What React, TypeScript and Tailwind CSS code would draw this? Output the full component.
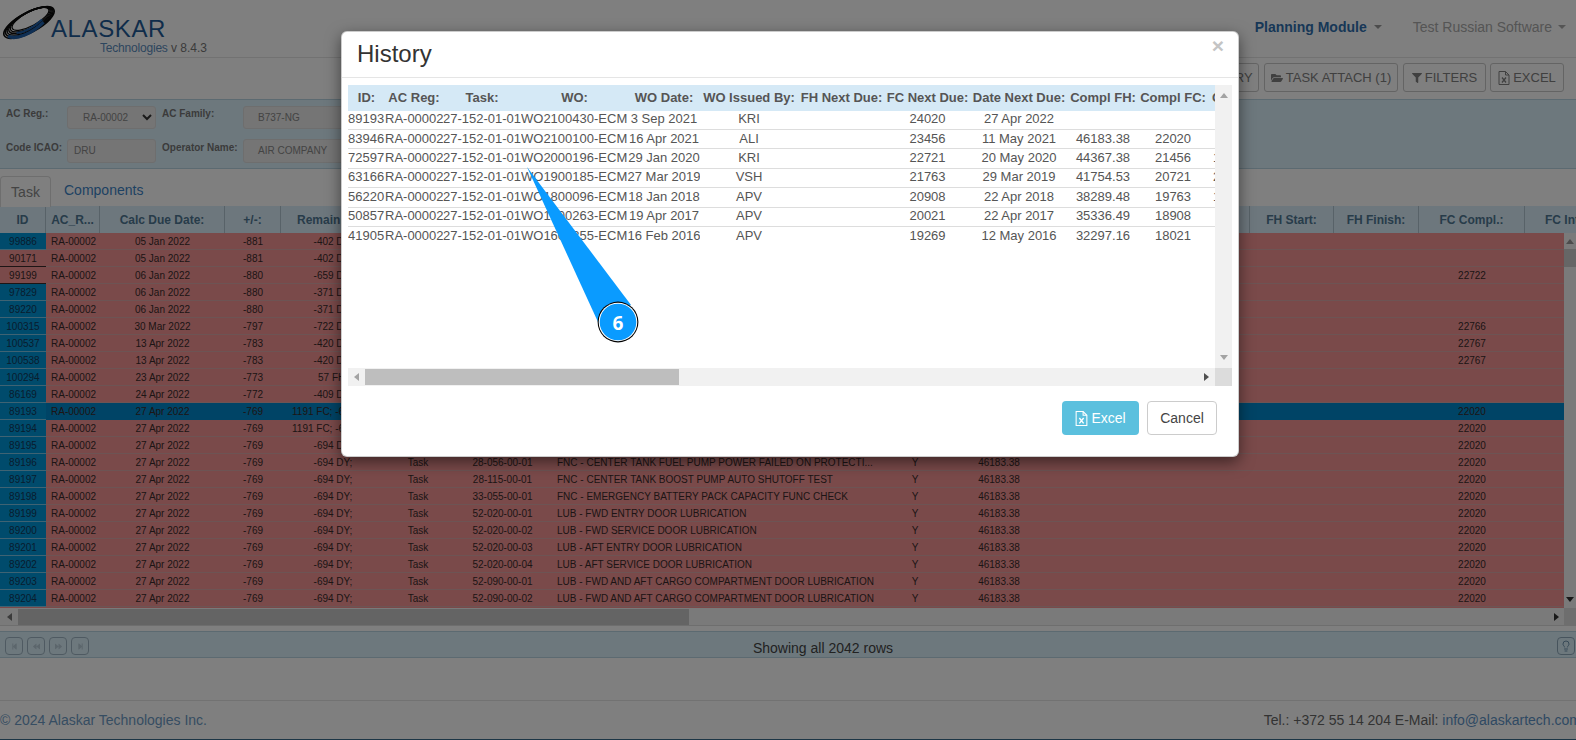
import React from "react";
import { FaFolderOpen, FaFilter, FaStepBackward, FaBackward, FaForward, FaStepForward } from "react-icons/fa";
import { Lightbulb } from "lucide-react";

const sans = "font-['Liberation_Sans',Arial,sans-serif]";

const top = [
  ["99886", "05 Jan 2022", "-881", "-402 DY;", "", 1],
  ["90171", "05 Jan 2022", "-881", "-402 DY;", "", 0],
  ["99199", "06 Jan 2022", "-880", "-659 DY;", "22722", 0],
  ["97829", "06 Jan 2022", "-880", "-371 DY;", "", 1],
  ["89220", "06 Jan 2022", "-880", "-371 DY;", "", 1],
  ["100315", "30 Mar 2022", "-797", "-722 DY;", "22766", 1],
  ["100537", "13 Apr 2022", "-783", "-420 DY;", "22767", 1],
  ["100538", "13 Apr 2022", "-783", "-420 DY;", "22767", 1],
  ["100294", "23 Apr 2022", "-773", "57 FH;", "", 1],
  ["86169", "24 Apr 2022", "-772", "-409 DY;", "", 1],
  ["89193", "27 Apr 2022", "-769", "1191 FC; -694 DY;", "22020", 1],
  ["89194", "27 Apr 2022", "-769", "1191 FC; -694 DY;", "22020", 1],
  ["89195", "27 Apr 2022", "-769", "-694 DY;", "22020", 1],
] as const;

const lower = [
  ["89196", "28-056-00-01", "FNC - CENTER TANK FUEL PUMP POWER FAILED ON PROTECTI..."],
  ["89197", "28-115-00-01", "FNC - CENTER TANK BOOST PUMP AUTO SHUTOFF TEST"],
  ["89198", "33-055-00-01", "FNC - EMERGENCY BATTERY PACK CAPACITY FUNC CHECK"],
  ["89199", "52-020-00-01", "LUB - FWD ENTRY DOOR LUBRICATION"],
  ["89200", "52-020-00-02", "LUB - FWD SERVICE DOOR LUBRICATION"],
  ["89201", "52-020-00-03", "LUB - AFT ENTRY DOOR LUBRICATION"],
  ["89202", "52-020-00-04", "LUB - AFT SERVICE DOOR LUBRICATION"],
  ["89203", "52-090-00-01", "LUB - FWD AND AFT CARGO COMPARTMENT DOOR LUBRICATION"],
  ["89204", "52-090-00-02", "LUB - FWD AND AFT CARGO COMPARTMENT DOOR LUBRICATION"],
];

const history = [
  ["89193", "WO2100430-ECM", "3 Sep 2021", "KRI", "24020", "27 Apr 2022", "", "", ""],
  ["83946", "WO2100100-ECM", "16 Apr 2021", "ALI", "23456", "11 May 2021", "46183.38", "22020", ""],
  ["72597", "WO2000196-ECM", "29 Jan 2020", "KRI", "22721", "20 May 2020", "44367.38", "21456", "11 Jan 2020"],
  ["63166", "WO1900185-ECM", "27 Mar 2019", "VSH", "21763", "29 Mar 2019", "41754.53", "20721", "27 Mar 2019"],
  ["56220", "WO1800096-ECM", "18 Jan 2018", "APV", "20908", "22 Apr 2018", "38289.48", "19763", "18 Jan 2018"],
  ["50857", "WO1700263-ECM", "19 Apr 2017", "APV", "20021", "22 Apr 2017", "35336.49", "18908", ""],
  ["41905", "WO1600355-ECM", "16 Feb 2016", "APV", "19269", "12 May 2016", "32297.16", "18021", ""],
];

function ExcelIcon({ color, size = 14 }: { color: string; size?: number }) {
  return (
    <svg width={size - 2} height={size} viewBox="0 0 12 14" fill="none" stroke={color} strokeWidth="1">
      <path d="M1 .5h6.5L11 4v9.5H1z" />
      <path d="M7.5.5V4H11" />
      <path d="M4 6.5l4 5M8 6.5l-4 5" strokeWidth="1.3" />
    </svg>
  );
}

function Logo() {
  return (
    <div className="relative w-[210px] h-[50px] shrink-0">
      <svg className="absolute left-[1px] top-[5px]" width="56" height="35" viewBox="0 0 56 35" fill="none">
        <g transform="rotate(-28 28 17.5)">
          <ellipse cx="28" cy="17.5" rx="28" ry="10" stroke="#0c0c0c" strokeWidth="1.6" />
          <ellipse cx="28.6" cy="17" rx="26.5" ry="9.4" stroke="#0c0c0c" strokeWidth="1.6" />
          <ellipse cx="29.2" cy="16.5" rx="25" ry="8.8" stroke="#0c0c0c" strokeWidth="1.4" />
          <ellipse cx="29.8" cy="16" rx="23.5" ry="8.2" stroke="#0c0c0c" strokeWidth="1.4" />
          <ellipse cx="30.4" cy="15.5" rx="22" ry="7.6" stroke="#0c0c0c" strokeWidth="1.2" />
          <ellipse cx="31" cy="15" rx="20.5" ry="7" stroke="#0c0c0c" strokeWidth="1.2" />
          <path d="M3 20c6 7 22 9 38 4" stroke="#1f5fa8" strokeWidth="3.4" />
          <path d="M12 21c7 3 18 3 29 0" stroke="#1f5fa8" strokeWidth="2" />
        </g>
      </svg>
      <div className="absolute left-[51px] top-[13px] text-[24px] leading-[32px] tracking-[0.6px] text-[#1f5a96] whitespace-nowrap">ALASKAR</div>
      <div className="absolute left-[100px] top-[40px] text-[12px] leading-[16px] tracking-[-0.2px] text-[#5b8cbd] whitespace-nowrap">Technologies</div>
      <div className="absolute left-[171px] top-[40px] text-[12px] leading-[16px] text-[#777] whitespace-nowrap">v 8.4.3</div>
    </div>
  );
}

function Tool({ children, className = "" }: { children: React.ReactNode; className?: string }) {
  return (
    <div className={`h-[29px] flex items-center justify-center gap-[3px] border border-[#c8c8c8] rounded-[3px] text-[13px] text-[#808080] bg-white whitespace-nowrap ${className}`}>
      {children}
    </div>
  );
}

function Row({ r }: { r: { id: string; date: string; pm: string; rem: string; no?: string; desc?: string; fc: string; blue: boolean; sel: boolean } }) {
  return (
    <div className={`flex h-[17px] shrink-0 items-start leading-[18px] border-b text-[10px] text-[#3a2a2a] w-[1564px] ${r.sel ? "bg-[#0088cc] border-[#0088cc]" : "bg-[#f59595] border-[#dba8a8]"}`}>
      <div className={`w-[46px] h-[17px] text-center border-b shrink-0 ${r.blue ? "bg-[#0096d9] border-[#7fc6e6] text-[#123a5c]" : ""}`}>{r.id}</div>
      <div className="w-[54px] pl-[5px] shrink-0">RA-00002</div>
      <div className="w-[125px] text-center shrink-0">{r.date}</div>
      <div className="w-[56px] text-center shrink-0">{r.pm}</div>
      <div className="w-[104px] text-center shrink-0 whitespace-nowrap">{r.rem}</div>
      <div className="w-[66px] text-center shrink-0">Task</div>
      <div className="w-[103px] text-center shrink-0">{r.no}</div>
      <div className="w-[341px] pl-[3px] shrink-0 whitespace-nowrap">{r.desc}</div>
      <div className="w-[40px] text-center shrink-0">{r.desc ? "Y" : ""}</div>
      <div className="w-[128px] text-center shrink-0">{r.desc ? "46183.38" : ""}</div>
      <div className="w-[356px] shrink-0" />
      <div className="w-[106px] text-center shrink-0">{r.fc}</div>
    </div>
  );
}

const th = "h-[27px] flex items-center justify-center border-r border-[#b0c4d0] shrink-0 whitespace-nowrap";
const hc = "flex items-center shrink-0 whitespace-nowrap overflow-hidden";

function Triangle({ dir, color = "#888", className = "" }: { dir: "up" | "down" | "left" | "right"; color?: string; className?: string }) {
  const d = { up: "M0 5L4 0l4 5z", down: "M0 0h8L4 5z", left: "M5 0v8L0 4z", right: "M0 0v8l5-4z" }[dir];
  const v = dir === "up" || dir === "down";
  return (
    <svg className={className} width={v ? 8 : 5} height={v ? 5 : 8} viewBox={v ? "0 0 8 5" : "0 0 5 8"}>
      <path d={d} fill={color} />
    </svg>
  );
}

function Modal() {
  const cols = [
    "w-[37px]", "w-[58px]", "w-[78px]", "w-[107px]", "w-[72px]", "w-[98px]", "w-[87px]", "w-[85px]", "w-[98px]", "w-[70px]", "w-[70px]", "w-[90px]",
  ];
  const heads = ["ID:", "AC Reg:", "Task:", "WO:", "WO Date:", "WO Issued By:", "FH Next Due:", "FC Next Due:", "Date Next Due:", "Compl FH:", "Compl FC:", "Compl Date:"];
  return (
    <div className="ml-[341px] mt-[31px] w-[898px] h-[426px] bg-white rounded-[6px] border border-black/20 shadow-[0_5px_15px_rgba(0,0,0,0.5)] flex flex-col text-[13px] text-[#555]">
      <div className="h-[45px] shrink-0 border-b border-[#e5e5e5] box-content flex items-start justify-between pl-[15px] pr-[14px]">
        <div className="text-[24px] leading-[44px] text-[#333]">History</div>
        <div className="text-[21px] leading-[26px] font-bold text-[#c4c4c4] mt-[1px]">×</div>
      </div>
      <div className="px-[6px] pt-[7px] shrink-0">
        <div className="w-[884px] h-[301px] grid grid-cols-[867px_17px] grid-rows-[283px_18px] bg-[#f1f1f1]">
          <div className="bg-white overflow-hidden">
            <div className="w-[1000px]">
              <div className="flex h-[25.6px] bg-[#d5e9f6] font-bold items-center">
                {heads.map((h, i) => (
                  <div key={h} className={`${cols[i]} ${hc} ${i === 11 ? "pl-[4px]" : "justify-center"}`}>{h}</div>
                ))}
              </div>
              {history.map((r, idx) => (
                <div key={r[0]} className={`flex h-[19.4px] items-center pb-[1.5px] ${idx < 6 ? "border-b border-[#ddd]" : ""}`}>
                  <div className={`${cols[0]} ${hc}`}>{r[0]}</div>
                  <div className={`${cols[1]} ${hc}`}>RA-00002</div>
                  <div className={`${cols[2]} ${hc}`}>27-152-01-01</div>
                  <div className={`${cols[3]} ${hc}`}>{r[1]}</div>
                  <div className={`${cols[4]} ${hc} justify-center`}>{r[2]}</div>
                  <div className={`${cols[5]} ${hc} justify-center`}>{r[3]}</div>
                  <div className={`${cols[6]} ${hc}`} />
                  <div className={`${cols[7]} ${hc} justify-center`}>{r[4]}</div>
                  <div className={`${cols[8]} ${hc} justify-center`}>{r[5]}</div>
                  <div className={`${cols[9]} ${hc} justify-center`}>{r[6]}</div>
                  <div className={`${cols[10]} ${hc} justify-center`}>{r[7]}</div>
                  <div className={`${cols[11]} ${hc} pl-[5px]`}>{r[8]}</div>
                </div>
              ))}
            </div>
          </div>
          <div className="flex flex-col items-center justify-between py-[8px]">
            <Triangle dir="up" color="#a3a3a3" />
            <Triangle dir="down" color="#a3a3a3" />
          </div>
          <div className="flex items-center bg-[#f1f1f1] relative">
            <div className="w-[17px] flex justify-center"><Triangle dir="left" color="#a3a3a3" /></div>
            <div className="w-[314px] h-[16px] bg-[#bebebe]" />
            <div className="flex-1 flex justify-end pr-[6px]"><Triangle dir="right" color="#505050" /></div>
          </div>
          <div className="bg-[#dcdcdc]" />
        </div>
      </div>
      <div className="flex justify-end gap-[8px] pr-[21px] pt-[15px]">
        <div className="w-[77px] h-[34px] bg-[#5bc0de] rounded-[4px] flex items-center justify-center gap-[3px] text-white text-[14px]">
          <ExcelIcon color="#fff" size={15} />
          Excel
        </div>
        <div className="w-[70px] h-[34px] border border-[#ccc] rounded-[4px] flex items-center justify-center text-[14px] text-[#444]">Cancel</div>
      </div>
    </div>
  );
}

export default function App() {
  const rows = [
    ...top.map((t, i) => ({ id: t[0], date: t[1], pm: t[2], rem: t[3], fc: t[4], blue: t[5] === 1, sel: i === 10 })),
    ...lower.map((l) => ({ id: l[0], date: "27 Apr 2022", pm: "-769", rem: "-694 DY;", no: l[1], desc: l[2], fc: "22020", blue: true, sel: false })),
  ];
  return (
    <div className={`relative w-[1576px] h-[740px] overflow-hidden bg-white ${sans}`}>
      <div className="h-[58px] border-b border-[#e5e5e5] flex items-start justify-between">
        <Logo />
        <div className="flex items-center h-[54px] text-[14px] pr-[10px]">
          <span className="font-bold text-[#2f6fae]">Planning Module</span>
          <span className="ml-[7px] w-0 h-0 border-x-[4px] border-x-transparent border-t-[4px] border-t-[#999]" />
          <span className="ml-[31px] text-[#aaa]">Test Russian Software</span>
          <span className="ml-[6px] w-0 h-0 border-x-[4px] border-x-transparent border-t-[4px] border-t-[#aaa]" />
        </div>
      </div>
      <div className="h-[41px] flex items-start justify-end pr-[12px] pt-[5px]">
        <Tool className="w-[70px] mr-[5px]">HISTORY</Tool>
        <Tool className="w-[134px] mr-[5px]"><FaFolderOpen size={12} />TASK ATTACH (1)</Tool>
        <Tool className="w-[83px] mr-[4px]"><FaFilter size={10} />FILTERS</Tool>
        <Tool className="w-[74px]"><ExcelIcon color="#808080" />EXCEL</Tool>
      </div>
      <div className="h-[70px] bg-[#daf0fb] border-y border-[#b9d4e2] pt-[6px] px-[6px] flex flex-col gap-[10px] text-[10px] leading-[14px] font-bold text-[#777] whitespace-nowrap">
        <div className="flex h-[23px]">
          <div className="w-[61px] pt-[1px]">AC Reg.:</div>
          <div className="w-[89px] h-[23px] rounded-[3px] border border-[#ddd] bg-[#eaeaea] flex items-center justify-between font-normal pl-[15px] pr-[3px] text-[#888]">
            RA-00002
            <svg width="10" height="7" viewBox="0 0 10 7" fill="none" stroke="#333" strokeWidth="2"><path d="M1 1l4 4 4-4" /></svg>
          </div>
          <div className="w-[87px] pl-[6px] pt-[1px]">AC Family:</div>
          <div className="w-[150px] h-[23px] rounded-[3px] border border-[#ddd] bg-[#eaeaea] flex items-center font-normal pl-[14px] text-[#888]">B737-NG</div>
        </div>
        <div className="flex h-[24px]">
          <div className="w-[61px] pt-[2px]">Code ICAO:</div>
          <div className="w-[89px] h-[24px] rounded-[3px] border border-[#ddd] bg-[#eaeaea] flex items-center font-normal pl-[6px] text-[#888]">DRU</div>
          <div className="w-[87px] pl-[6px] pt-[2px]">Operator Name:</div>
          <div className="w-[150px] h-[24px] rounded-[3px] border border-[#ddd] bg-[#eaeaea] flex items-center font-normal pl-[14px] text-[#888]">AIR COMPANY</div>
        </div>
      </div>
      <div className="h-[37px] flex items-end text-[14px]">
        <div className="w-[51px] h-[31px] border border-b-0 border-[#ddd] rounded-t-[4px] flex items-center justify-center text-[#888] -mb-px bg-white relative">Task</div>
        <div className="ml-[13px] h-[31px] flex items-center text-[#3d84c6]">Components</div>
      </div>
      <div className="h-[27px] flex bg-[#dbeefa] text-[12px] font-bold text-[#4f7894] overflow-hidden">
        <div className={`w-[46px] ${th}`}>ID</div>
        <div className={`w-[54px] ${th}`}>AC_R...</div>
        <div className={`w-[125px] ${th}`}>Calc Due Date:</div>
        <div className={`w-[56px] ${th}`}>+/-:</div>
        <div className={`w-[969px] ${th} !justify-start pl-[16px]`}>Remain</div>
        <div className={`w-[84px] ${th}`}>FH Start:</div>
        <div className={`w-[85px] ${th}`}>FH Finish:</div>
        <div className={`w-[106px] ${th}`}>FC Compl.:</div>
        <div className={`w-[100px] ${th} !justify-start pl-[20px]`}>FC Int</div>
      </div>
      <div className="h-[393px] grid grid-cols-[1564px_12px] grid-rows-[375px_18px]">
        <div className="flex flex-col overflow-hidden bg-[#f59595]">
          {rows.map((r) => <Row key={r.id} r={r} />)}
        </div>
        <div className="bg-[#f4f4f4] flex flex-col items-center justify-between pt-[6px] pb-[6px] relative">
          <Triangle dir="up" color="#999" />
          <Triangle dir="down" color="#333" />
          <div className="absolute left-0 right-0 top-[16px] h-[18px] bg-[#cdcdcd]" />
        </div>
        <div className="bg-[#f4f4f4] flex items-center border-b border-[#ddd]">
          <div className="w-[18px] flex justify-center"><Triangle dir="left" color="#777" /></div>
          <div className="w-[671px] h-[16px] bg-[#c8c8c8]" />
          <div className="flex-1 flex justify-end pr-[5px]"><Triangle dir="right" color="#333" /></div>
        </div>
        <div className="bg-[#dddddd]" />
      </div>
      <div className="mt-[5px] h-[27px] bg-[#daf0fb] border-y border-[#b9d4e2] relative flex items-center justify-center text-[14px] text-[#444]">
        <div className="absolute left-[5px] top-[5px] flex gap-[4px]">
          {[FaStepBackward, FaBackward, FaForward, FaStepForward].map((I, i) => (
            <div key={i} className="w-[18px] h-[18px] border border-[#9fb5c4] rounded-[4px] flex items-center justify-center text-[#b8ccd8]"><I size={7} /></div>
          ))}
        </div>
        <span className="pl-[70px] pt-[8px]">Showing all 2042 rows</span>
        <div className="absolute right-[1px] top-[5px] w-[18px] h-[18px] border border-[#8fa9ba] rounded-[4px] flex items-center justify-center text-[#6f93ad]"><Lightbulb size={12} /></div>
      </div>
      <div className="h-[42px] border-b border-[#e5e5e5] box-content" />
      <div className="h-[38px] flex items-center justify-between text-[14px]">
        <span className="text-[#6d9ac4]">© 2024 Alaskar Technologies Inc.</span>
        <span className="whitespace-nowrap text-[#666] -mr-[5px]">Tel.: +372 55 14 204 E-Mail: <span className="text-[#5e93c6]">info@alaskartech.com</span></span>
      </div>
      <div className="h-[2px] bg-[#3a6d8c]" />

      <div className="absolute inset-0 bg-black/50">
        <Modal />
      </div>

      <svg className="absolute left-[520px] top-[160px]" width="125" height="190" viewBox="520 160 125 190">
        <polygon points="527,167 598,322 631,305" fill="#0a9bff" />
        <circle cx="618" cy="322" r="20.4" fill="#000" />
        <circle cx="618" cy="322" r="19.3" fill="#fff" />
        <circle cx="618" cy="322" r="18.3" fill="#0a9bff" />
        <text x="618" y="330" textAnchor="middle" fontSize="19" fontWeight="700" fill="#fff" fontFamily="'Open Sans', sans-serif">6</text>
      </svg>
    </div>
  );
}
